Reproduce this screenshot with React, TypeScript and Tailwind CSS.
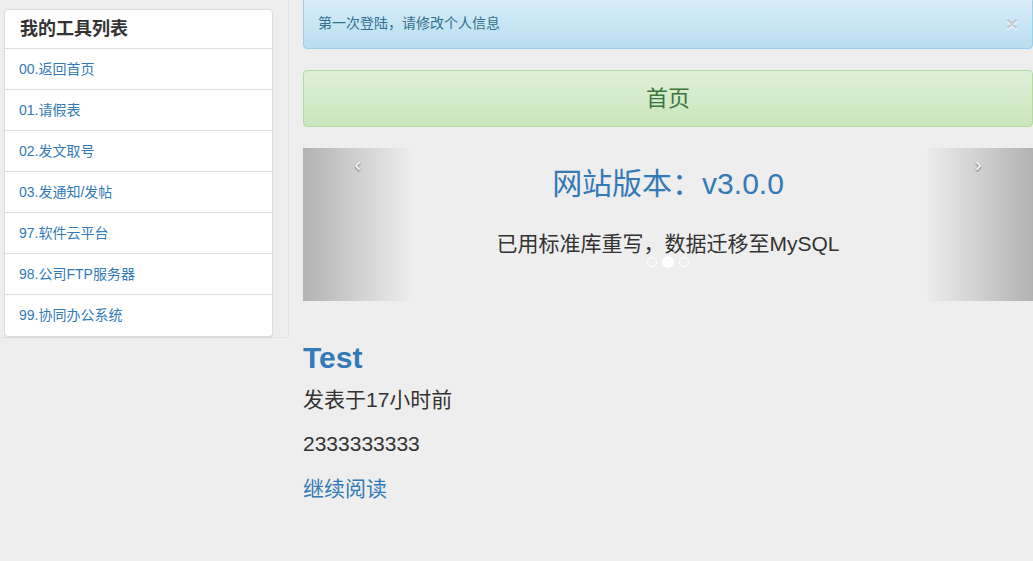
const tools = [
  "00.返回首页",
  "01.请假表",
  "02.发文取号",
  "03.发通知/发帖",
  "97.软件云平台",
  "98.公司FTP服务器",
  "99.协同办公系统",
];

const font = { fontFamily: '"Liberation Sans", "Noto Sans CJK SC", sans-serif' };

function Sidebar() {
  return (
    <div className="w-[289px] shrink-0 self-start border-r border-b border-[#e3e3e3] pl-[4px] pt-[9px] pr-[15px]">
      <div className="w-[269px] rounded-[4px] border border-[#dddddd] bg-white shadow-[0_1px_1px_rgba(0,0,0,0.05)]">
        <div className="h-[39px] flex items-center pl-[15px] text-[18px] font-bold text-[#333333] border-b border-[#dddddd]">
          我的工具列表
        </div>
        {tools.map((t, i) => (
          <a
            key={t}
            href="#"
            className={
              "h-[41px] flex items-center pl-[14px] text-[14px] text-[#337ab7] " +
              (i < tools.length - 1 ? "border-b border-[#dddddd]" : "")
            }
          >
            {t}
          </a>
        ))}
      </div>
    </div>
  );
}

function Carousel() {
  return (
    <div className="relative mt-[21px] h-[153px] overflow-hidden">
      <div className="pt-[17px] text-center text-[30px] leading-[38px] text-[#337ab7]">网站版本：v3.0.0</div>
      <div className="mt-[27px] text-center text-[21px] leading-[28px] text-[#333333]">
        已用标准库重写，数据迁移至MySQL
      </div>

      {/* controls */}
      <div className="absolute left-0 top-0 bottom-0 w-[15%] bg-[linear-gradient(to_right,rgba(0,0,0,0.25),rgba(0,0,0,0))] flex justify-center">
        <span className="mt-[2px] text-[20px] leading-[28px] text-white [text-shadow:0_1px_2px_rgba(0,0,0,0.6)]">‹</span>
      </div>
      <div className="absolute right-0 top-0 bottom-0 w-[15%] bg-[linear-gradient(to_left,rgba(0,0,0,0.25),rgba(0,0,0,0))] flex justify-center">
        <span className="mt-[2px] text-[20px] leading-[28px] text-white [text-shadow:0_1px_2px_rgba(0,0,0,0.6)]">›</span>
      </div>

      {/* indicators */}
      <div className="absolute left-0 right-0 top-[108px] flex items-center justify-center gap-[5px]">
        <span className="w-[10px] h-[10px] rounded-full border border-white" />
        <span className="w-[12px] h-[12px] rounded-full bg-white" />
        <span className="w-[10px] h-[10px] rounded-full border border-white" />
      </div>
    </div>
  );
}

export default function App() {
  return (
    <div className="min-h-[561px] w-[1033px] bg-[#eeeeee] flex overflow-hidden" style={font}>
      <Sidebar />

      <main className="flex-1 pl-[14px]">
        <div className="-mt-[3px] h-[52px] rounded-[4px] border border-[#9acfea] bg-[linear-gradient(to_bottom,#d9edf7,#b9def0)] flex items-center justify-between pl-[14px] pr-[14px] pt-[1px] text-[14px] text-[#31708f]">
          <span>第一次登陆，请修改个人信息</span>
          <span className="text-[21px] font-bold leading-none text-black/20 [text-shadow:0_1px_0_#fff]">×</span>
        </div>

        <button className="mt-[21px] w-full h-[57px] rounded-[4px] border border-[#b2dba1] bg-[linear-gradient(to_bottom,#dff0d8,#c8e5bc)] text-[22px] text-[#3c763d]">
          首页
        </button>

        <Carousel />

        <h2 className="mt-[41px] h-[32px] leading-[32px] text-[30px] font-bold text-[#337ab7]">Test</h2>
        <p className="mt-[11px] text-[21px] leading-[30px] text-[#333333]">发表于17小时前</p>
        <p className="mt-[14px] text-[21px] leading-[30px] text-[#333333]">2333333333</p>
        <a href="#" className="block mt-[15px] text-[21px] leading-[30px] text-[#337ab7]">继续阅读</a>
      </main>
    </div>
  );
}
